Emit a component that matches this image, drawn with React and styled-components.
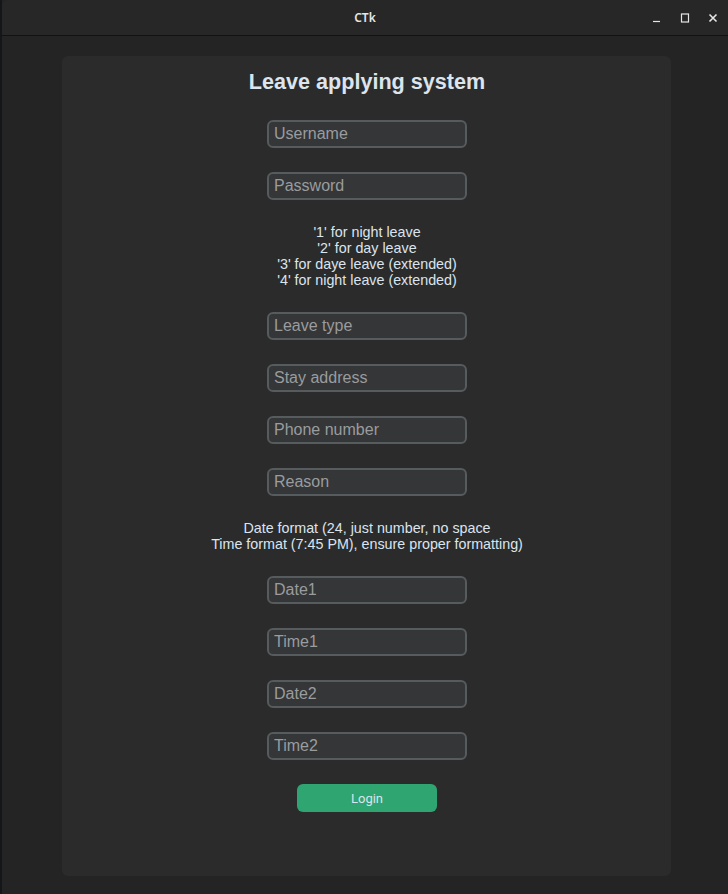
import React from "react";
import styled, { createGlobalStyle } from "styled-components";

const Global = createGlobalStyle`
  html, body { margin: 0; padding: 0; background: #242424; }
  body { font-family: "Liberation Sans", Arial, sans-serif; }
`;

const Window = styled.div`
  width: 728px;
  height: 894px;
  display: flex;
  flex-direction: column;
  background: #242424;
  border-left: 2px solid #14161a;
  box-sizing: border-box;
  overflow: hidden;
`;

const TitleBar = styled.div`
  height: 35px;
  flex: none;
  display: flex;
  align-items: center;
  justify-content: center;
  position: relative;
  background: #272727;
  border-bottom: 1px solid #121212;
  border-top-left-radius: 6px;
  color: #e6e6e6;
  font-family: "Noto Sans", "DejaVu Sans", sans-serif;
  font-size: 12px;
  font-weight: 600;
`;

const Controls = styled.div`
  position: absolute;
  right: 10px;
  top: 0;
  height: 35px;
  display: flex;
  align-items: center;
  gap: 18px;
`;

const Ctl = styled.svg`
  width: 10px;
  height: 10px;
  display: block;
`;

const Body = styled.div`
  flex: 1;
  padding: 20px 57px 18px 60px;
  display: flex;
`;

const Frame = styled.div`
  flex: 1;
  background: #2b2b2b;
  border-radius: 6px;
  display: flex;
  flex-direction: column;
  align-items: center;
  padding-top: 13px;
  padding-left: 1px;
`;

const Title = styled.h1`
  margin: 0 0 25px 0;
  font-size: 21.6px;
  line-height: 26px;
  font-weight: 700;
  color: #dce4ee;
`;

const Entry = styled.input`
  width: 200px;
  height: 28px;
  box-sizing: border-box;
  margin: ${(p) => p.$mt || 0}px 0 0 0;
  background: #343638;
  border: 2px solid #565b5e;
  border-radius: 6px;
  padding: 0 0 0 5px;
  color: #dce4ee;
  font-family: "Liberation Sans", Arial, sans-serif;
  font-size: 16px;
  outline: none;
  &::placeholder { color: #9a9c9e; }
`;

const Info = styled.div`
  margin-top: ${(p) => p.$mt}px;
  margin-bottom: ${(p) => p.$mb}px;
  text-align: center;
  color: #dce4ee;
  font-size: 14.3px;
  line-height: 16px;
`;

const Button = styled.button`
  margin-top: 24px;
  width: 140px;
  height: 28px;
  border: none;
  border-radius: 6px;
  background: #2fa572;
  color: #dce4ee;
  font-family: Roboto, "Liberation Sans", sans-serif;
  font-size: 13px;
  font-weight: 400;
  padding: 0;
`;

export default function App() {
  return (
    <>
      <Global />
      <Window>
        <TitleBar>
          CTk
          <Controls>
            <Ctl viewBox="0 0 10 10">
              <path d="M1 8.5 H8" stroke="#e6e6e6" strokeWidth="1.2" />
            </Ctl>
            <Ctl viewBox="0 0 10 10">
              <rect x="1.5" y="1" width="7" height="8" fill="none" stroke="#e6e6e6" strokeWidth="1.2" />
            </Ctl>
            <Ctl viewBox="0 0 10 10">
              <path d="M1.5 1.5 L8.5 8.5 M8.5 1.5 L1.5 8.5" stroke="#e6e6e6" strokeWidth="1.6" />
            </Ctl>
          </Controls>
        </TitleBar>
        <Body>
          <Frame>
            <Title>Leave applying system</Title>
            <Entry placeholder="Username" />
            <Entry $mt={24} placeholder="Password" type="text" />
            <Info $mt={24} $mb={24}>
              '1' for night leave
              <br />'2' for day leave
              <br />'3' for daye leave (extended)
              <br />'4' for night leave (extended)
            </Info>
            <Entry placeholder="Leave type" />
            <Entry $mt={24} placeholder="Stay address" />
            <Entry $mt={24} placeholder="Phone number" />
            <Entry $mt={24} placeholder="Reason" />
            <Info $mt={24} $mb={24}>
              Date format (24, just number, no space
              <br />Time format (7:45 PM), ensure proper formatting)
            </Info>
            <Entry placeholder="Date1" />
            <Entry $mt={24} placeholder="Time1" />
            <Entry $mt={24} placeholder="Date2" />
            <Entry $mt={24} placeholder="Time2" />
            <Button>Login</Button>
          </Frame>
        </Body>
      </Window>
    </>
  );
}
